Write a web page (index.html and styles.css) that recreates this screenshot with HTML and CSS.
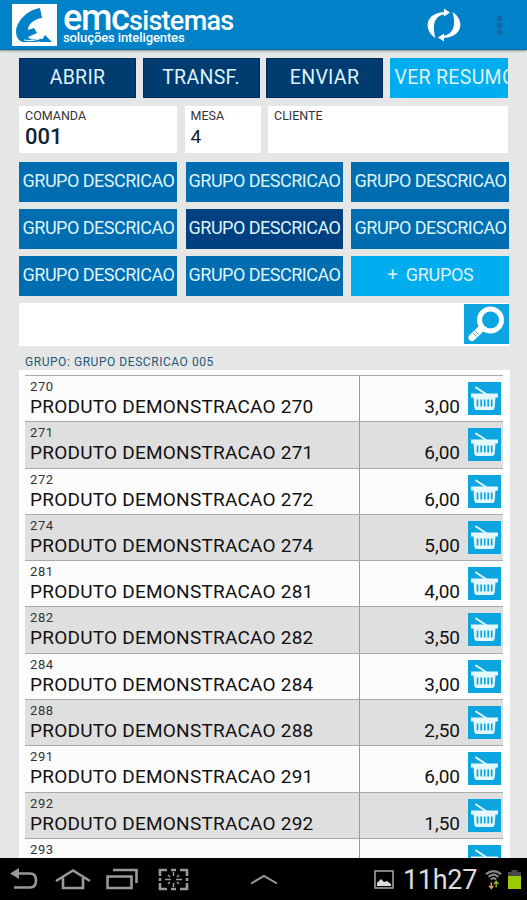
FILE: index.html
```html
<!DOCTYPE html>
<html lang="pt-BR">
<head>
    <meta charset="UTF-8">
    <meta name="viewport" content="width=device-width, initial-scale=1.0">
    <title>EMC Sistemas</title>
    <link rel="stylesheet" href="styles.css">
</head>
<body>
<svg class="symbols" width="0" height="0">
    <symbol id="basket" viewBox="0 0 33 33">
        <path d="M8 5.500L18 12" stroke="#e4f7fd" stroke-width="2" stroke-linecap="round"/>
        <path d="M3 11.500H30V15.500H3Z" fill="#e4f7fd"/>
        <path d="M5.500 15H27.500L26.700 25.500Q26.500 28 24 28H9Q6.500 28 6.300 25.500Z" fill="#e4f7fd"/>
        <path d="M9.500 17.500V24.500M13.200 17.500V24.500M16.700 17.500V24.500M20.200 17.500V24.500M23.700 17.500V24.500" stroke="#0ca5e0" stroke-width="1.700"/>
    </symbol>
</svg>

<header>
    <svg class="logo" viewBox="0 0 45 42">
        <rect width="45" height="42" fill="#fff"/>
        <path d="M28 4C15 6 5 17 4 27C4 32 6 37 11 38H22C26 38 30 37 31 35L24 35C20 36 17 35 16 33L25 29L22 24L16 26C16 20 22 15 30 14Z" fill="#0082c8"/>
        <path d="M26 38C29 37 31 35 33 31L40 38Z" fill="#0082c8"/>
        <path d="M12 36Q23 38 31 33" stroke="#fff" stroke-width="1" fill="none"/>
    </svg>
    <div class="brand">
        <h1><b>emc</b><span>sistemas</span></h1>
        <p>soluções inteligentes</p>
    </div>
    <svg class="sync" viewBox="0 0 36 36">
        <path d="M9.500 30C-3 22 -1 5 18 4V0.500L24 4.500L18 8.500V6.500C8 8 6 18 9.500 30Z" fill="#fff"/>
        <path d="M26.500 4C39 12 37 29 18 30V33.500L12 29.500L18 25.500V27.500C28 26 30 16 26.500 4Z" fill="#fff"/>
    </svg>
    <div class="dots"><i></i><i></i><i></i></div>
</header>

<main>
    <div class="actions">
        <button>ABRIR</button>
        <button>TRANSF.</button>
        <button>ENVIAR</button>
        <button class="light summary">VER RESUMO</button>
    </div>

    <div class="fields">
        <div class="field"><label>COMANDA</label><b>001</b></div>
        <div class="field"><label>MESA</label><span>4</span></div>
        <div class="field"><label>CLIENTE</label></div>
    </div>

    <div class="groups">
        <button>GRUPO DESCRICAO</button>
        <button>GRUPO DESCRICAO</button>
        <button>GRUPO DESCRICAO</button>
        <button>GRUPO DESCRICAO</button>
        <button class="active">GRUPO DESCRICAO</button>
        <button>GRUPO DESCRICAO</button>
        <button>GRUPO DESCRICAO</button>
        <button>GRUPO DESCRICAO</button>
        <button class="light more">+&nbsp; GRUPOS</button>
    </div>

    <div class="search">
        <div class="search-input"></div>
        <svg viewBox="0 0 45 40">
            <rect width="45" height="40" fill="#0ca5e0"/>
            <path d="M18 24L8 33.500" stroke="#fff" stroke-width="7" stroke-linecap="round"/>
            <circle cx="26.500" cy="16" r="11" fill="#0ca5e0" stroke="#fff" stroke-width="5"/>
            <path d="M9 29L12.500 32.500M11 27L14.500 30.500" stroke="#0ca5e0" stroke-width="0.800"/>
        </svg>
    </div>

    <p class="group-name">GRUPO: GRUPO DESCRICAO 005</p>

    <div class="list">
        <div class="row"><div class="product"><small>270</small><p>PRODUTO DEMONSTRACAO 270</p></div><div class="price"><span>3,00</span><svg><use href="#basket"/></svg></div></div>
        <div class="row"><div class="product"><small>271</small><p>PRODUTO DEMONSTRACAO 271</p></div><div class="price"><span>6,00</span><svg><use href="#basket"/></svg></div></div>
        <div class="row"><div class="product"><small>272</small><p>PRODUTO DEMONSTRACAO 272</p></div><div class="price"><span>6,00</span><svg><use href="#basket"/></svg></div></div>
        <div class="row"><div class="product"><small>274</small><p>PRODUTO DEMONSTRACAO 274</p></div><div class="price"><span>5,00</span><svg><use href="#basket"/></svg></div></div>
        <div class="row"><div class="product"><small>281</small><p>PRODUTO DEMONSTRACAO 281</p></div><div class="price"><span>4,00</span><svg><use href="#basket"/></svg></div></div>
        <div class="row"><div class="product"><small>282</small><p>PRODUTO DEMONSTRACAO 282</p></div><div class="price"><span>3,50</span><svg><use href="#basket"/></svg></div></div>
        <div class="row"><div class="product"><small>284</small><p>PRODUTO DEMONSTRACAO 284</p></div><div class="price"><span>3,00</span><svg><use href="#basket"/></svg></div></div>
        <div class="row"><div class="product"><small>288</small><p>PRODUTO DEMONSTRACAO 288</p></div><div class="price"><span>2,50</span><svg><use href="#basket"/></svg></div></div>
        <div class="row"><div class="product"><small>291</small><p>PRODUTO DEMONSTRACAO 291</p></div><div class="price"><span>6,00</span><svg><use href="#basket"/></svg></div></div>
        <div class="row"><div class="product"><small>292</small><p>PRODUTO DEMONSTRACAO 292</p></div><div class="price"><span>1,50</span><svg><use href="#basket"/></svg></div></div>
        <div class="row"><div class="product"><small>293</small></div><div class="price"><svg><use href="#basket"/></svg></div></div>
    </div>
</main>

<footer>
    <svg class="nav-keys" viewBox="0 0 290 42" fill="none" stroke="#999" stroke-width="2.600">
        <path d="M16 15.500H30Q36 15.500 36 22.500Q36 29.500 30 29.500H14"/>
        <path d="M10 15.500L19 10V21Z" fill="#999" stroke="none"/>
        <path d="M56 23L73 12.500L90 23M63 20V30H83V20"/>
        <path d="M107.500 18.500H131.500V30H107.500ZM113 12H136.500V25"/>
        <path d="M160 18V12H167M171 12H176M180 12H187V18M187 25V31H180M176 31H171M167 31H160V25M160 20V23M187 20V23"/>
        <path d="M165 21.500H171M176 21.500H182M173.500 14V18M173.500 25V29M168 17L170 19M177 24L179 26M179 17L177 19M170 24L168 26" stroke-width="1.500"/>
        <path d="M251 25.500L264 18L277 25.500" stroke-width="2"/>
    </svg>
    <div class="status">
        <svg width="20" height="20" viewBox="0 0 20 20">
            <rect x="1" y="1" width="18" height="17" fill="none" stroke="#aaa" stroke-width="1.500"/>
            <path d="M3 16V13L7 9L10 12L13 11L17 14V16Z" fill="#ddd"/>
        </svg>
        <span class="clock">11h27</span>
        <svg class="wifi" width="17" height="22" viewBox="0 0 19 23" fill="none">
            <path d="M1 5Q9.500 -2 18 5M4 8Q9.500 3 15 8M6.500 11Q9.500 8 12.500 11" stroke="#888" stroke-width="2.400"/>
            <path d="M7 14V20M4.500 18L7 21L9.500 18" stroke="#e8a060" stroke-width="1.500"/>
            <path d="M12.500 20V14M10 16L12.500 13L15 16" stroke="#8cbf26" stroke-width="1.500"/>
        </svg>
        <svg width="13" height="20" viewBox="0 0 13 20">
            <path d="M3.500 0H9.500V2H13V7H0V2H3.500Z" fill="#484848"/>
            <rect y="6" width="13" height="13" fill="#99cc00"/>
        </svg>
    </div>
</footer>
</body>
</html>
```
FILE: styles.css
```css
:root {
    --header-blue: #0082c8;
    --navy: #003c70;
    --blue: #006db0;
    --light-blue: #00aeef;
    --icon-blue: #0ca5e0;
    --background: #e5e7e7;
}

* {
    box-sizing: border-box;
    margin: 0;
    padding: 0;
}

body {
    width: 527px;
    height: 900px;
    overflow: hidden;
    display: flex;
    flex-direction: column;
    background-color: var(--background);
    color: #111;
    font-family: 'Roboto', sans-serif;
}

.symbols {
    position: absolute;
}

header {
    flex: none;
    height: 50px;
    padding: 4px 0 0 12px;
    display: flex;
    align-items: flex-start;
    background-color: var(--header-blue);
    border-bottom: 1px solid #0871ad;
    box-shadow: 0 1px 2px rgba(0, 0, 0, 0.4);
    color: #fff;
}

.logo {
    flex: none;
    width: 45px;
    height: 42px;
}

.brand {
    flex: none;
    width: 359px;
    padding-left: 6px;
    white-space: nowrap;
}

.brand h1 {
    display: flex;
    align-items: baseline;
    height: 27px;
    line-height: 28px;
    font-weight: 500;
}

.brand b {
    width: 66px;
    font-size: 36px;
    font-weight: 500;
    letter-spacing: -1.300px;
}

.brand span {
    font-size: 27px;
    letter-spacing: -0.700px;
}

.brand p {
    font-size: 13px;
    line-height: 14px;
    font-weight: 500;
    letter-spacing: -0.100px;
}

.sync {
    flex: none;
    width: 36px;
    height: 36px;
    margin: 4px 0 0 10px;
}

.dots {
    margin: 12px 0 0 35px;
}

.dots i {
    display: block;
    width: 5px;
    height: 5px;
    margin-bottom: 2px;
    background-color: #1767a0;
}

main {
    flex: none;
    height: 808px;
    padding: 8px 18px 0 19px;
    overflow: hidden;
}

button {
    border: 0;
    border-radius: 0;
    overflow: hidden;
    white-space: nowrap;
    background-color: var(--blue);
    color: #dff3fb;
    font-family: inherit;
    font-size: 19px;
    text-align: center;
}

.actions {
    display: grid;
    grid-template-columns: 117px 117px 117px 118px;
    column-gap: 6.500px;
    height: 40px;
}

.actions button {
    background-color: var(--navy);
    border: 1px solid #002b5c;
    font-size: 19.500px;
    letter-spacing: 0.300px;
    padding-bottom: 1px;
}

.actions .summary {
    background-color: var(--light-blue);
    border: 0;
    padding-left: 5px;
    text-align: left;
    letter-spacing: 0.300px;
}

.fields {
    display: grid;
    grid-template-columns: 158px 76px 240px;
    column-gap: 7.500px;
    height: 45px;
    margin-top: 8px;
}

.field {
    padding: 3px 6px;
    background-color: #fff;
    color: #123;
}

.field label {
    display: block;
    height: 14px;
    font-size: 12.500px;
    line-height: 14px;
    color: #333;
}

.field b,
.field span {
    display: block;
    font-size: 22px;
    line-height: 27px;
    font-weight: 500;
}

.field span {
    font-size: 19px;
    font-weight: 400;
}

.groups {
    display: grid;
    grid-template-columns: 158px 157px 158px;
    grid-auto-rows: 40px;
    gap: 7px 8.500px;
    margin-top: 10.500px;
}

.groups button {
    padding: 0 0 2px 1px;
    font-size: 18px;
    letter-spacing: -0.500px;
}

.groups .active {
    background-color: #004080;
}

.groups .more {
    background-color: var(--light-blue);
    letter-spacing: -0.300px;
}

.search {
    display: flex;
    height: 43px;
    margin-top: 7px;
    background-color: #fff;
}

.search-input {
    width: 445px;
}

.search svg {
    width: 45px;
    height: 40px;
    margin-top: 1px;
}

.group-name {
    height: 24.500px;
    padding-left: 6px;
    font-size: 12px;
    line-height: 32px;
    letter-spacing: 0.550px;
    color: #245878;
}

.list {
    width: 491px;
    height: 489px;
    padding: 5px 7px 0 6px;
    background-color: #fff;
    overflow: hidden;
}

.row {
    display: flex;
    height: 46.300px;
    border-top: 1px solid #aaa;
    background-color: #fbfbfb;
}

.row:nth-child(even) {
    background-color: #dfdfdf;
}

.product {
    width: 335px;
    padding: 3px 0 0 5px;
    border-right: 1px solid #999;
}

.product small {
    display: block;
    font-size: 13px;
    line-height: 15px;
    letter-spacing: 0.600px;
    color: #333;
}

.product p {
    font-size: 19px;
    line-height: 25px;
    white-space: nowrap;
    letter-spacing: 0.230px;
}

.price {
    flex: 1;
    display: flex;
    justify-content: flex-end;
    padding: 6px 2px 0 0;
}

.price span {
    margin: 12px 8px 0 0;
    font-size: 19px;
    line-height: 25px;
}

.price svg {
    width: 33px;
    height: 33px;
    background-color: var(--icon-blue);
}

footer {
    flex: none;
    height: 42px;
    display: flex;
    background-color: #000;
}

.nav-keys {
    flex: none;
    width: 290px;
    height: 42px;
}

.status {
    flex: 1;
    display: flex;
    align-items: center;
    padding: 2px 0 0 84px;
}

.clock {
    width: 73px;
    margin: 0 9px 0 9px;
    font-size: 27px;
    line-height: 30px;
    letter-spacing: -0.300px;
    color: #ddd;
}

.wifi {
    margin-right: 6px;
}
```
